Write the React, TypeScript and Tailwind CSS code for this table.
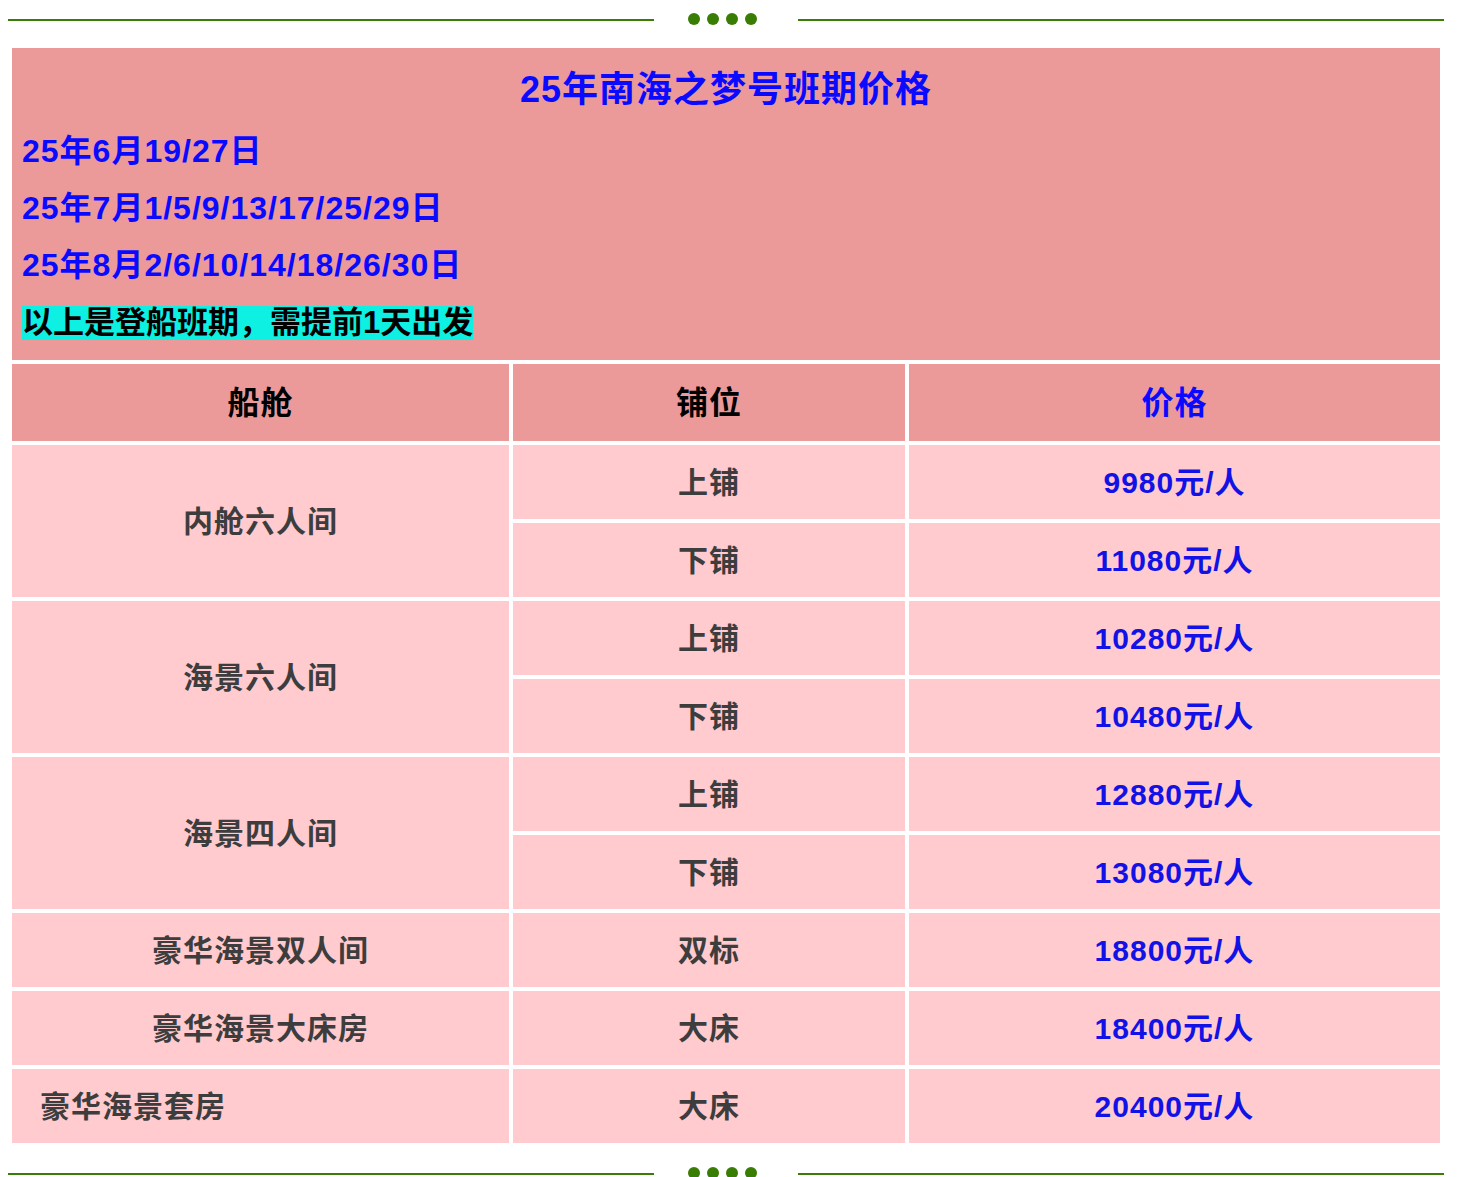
import React from 'react';

const FONT = { fontFamily: '"Liberation Sans", "Noto Sans CJK SC", sans-serif' };

type Berth = { bed: string; price: string };
type Cabin = { name: string; berths: Berth[]; indent?: boolean };

const cabins: Cabin[] = [
  {
    name: '内舱六人间',
    berths: [
      { bed: '上铺', price: '9980元/人' },
      { bed: '下铺', price: '11080元/人' },
    ],
  },
  {
    name: '海景六人间',
    berths: [
      { bed: '上铺', price: '10280元/人' },
      { bed: '下铺', price: '10480元/人' },
    ],
  },
  {
    name: '海景四人间',
    berths: [
      { bed: '上铺', price: '12880元/人' },
      { bed: '下铺', price: '13080元/人' },
    ],
  },
  { name: '豪华海景双人间', berths: [{ bed: '双标', price: '18800元/人' }] },
  { name: '豪华海景大床房', berths: [{ bed: '大床', price: '18400元/人' }] },
  { name: '豪华海景套房', berths: [{ bed: '大床', price: '20400元/人' }], indent: true },
];

function Divider() {
  return (
    <div className="flex h-[40px] items-center">
      <div className="h-[2px] flex-1 bg-[#3a7d05]" />
      <div className="flex w-[144px] items-center justify-center gap-[7px] pr-[7px] -mt-[2px]">
        {[0, 1, 2, 3].map((i) => (
          <span key={i} className="block h-[12px] w-[12px] rounded-full bg-[#3a7d05]" />
        ))}
      </div>
      <div className="h-[2px] flex-1 bg-[#3a7d05]" />
    </div>
  );
}

export default function App() {
  return (
    <div className="w-[1463px] bg-white" style={FONT}>
      <div className="w-[1444px] pl-[8px]">
        <Divider />

        {/* Price table */}
        <div className="mt-[4px] grid grid-cols-[497px_392px_531px] gap-[4px] p-[4px] font-bold tracking-[1px]">
          {/* Sailing dates */}
          <div className="col-span-3 h-[312px] bg-[#ec9999] px-[10px] pt-[17px]">
            <div className="text-center text-[36px] leading-[50px] text-[#0a0aff]">
              25年南海之梦号班期价格
            </div>
            <div className="mt-[8px] text-[32px] leading-[57px] text-[#0a0aff]">
              <div>25年6月19/27日</div>
              <div>25年7月1/5/9/13/17/25/29日</div>
              <div>25年8月2/6/10/14/18/26/30日</div>
              <div>
                <span className="inline-block bg-[#0df0e2] text-[31px] leading-[34px] tracking-normal text-black">
                  以上是登船班期，需提前1天出发
                </span>
              </div>
            </div>
          </div>

          {/* Header */}
          <div className="flex h-[77px] items-center justify-center bg-[#ec9999] text-[32px] text-black">船舱</div>
          <div className="flex h-[77px] items-center justify-center bg-[#ec9999] text-[32px] text-black">铺位</div>
          <div className="flex h-[77px] items-center justify-center bg-[#ec9999] text-[32px] text-[#0a0aff]">价格</div>

          {cabins.map((c) => (
            <React.Fragment key={c.name}>
              <div
                className={
                  'flex items-center bg-[#ffcbcf] text-[30px] text-[#3d3d3d] ' +
                  (c.indent ? 'justify-start pl-[28px] ' : 'justify-center ') +
                  (c.berths.length === 2 ? 'row-span-2' : 'h-[74px]')
                }
              >
                {c.name}
              </div>
              {c.berths.map((b, i) => (
                <React.Fragment key={i}>
                  <div className="col-start-2 flex h-[74px] items-center justify-center bg-[#ffcbcf] text-[30px] text-[#3d3d3d]">
                    {b.bed}
                  </div>
                  <div className="flex h-[74px] items-center justify-center bg-[#ffcbcf] text-[30px] text-[#1212e6]">
                    {b.price}
                  </div>
                </React.Fragment>
              ))}
            </React.Fragment>
          ))}
        </div>

        <div className="mt-[7px]">
          <Divider />
        </div>
      </div>
    </div>
  );
}
